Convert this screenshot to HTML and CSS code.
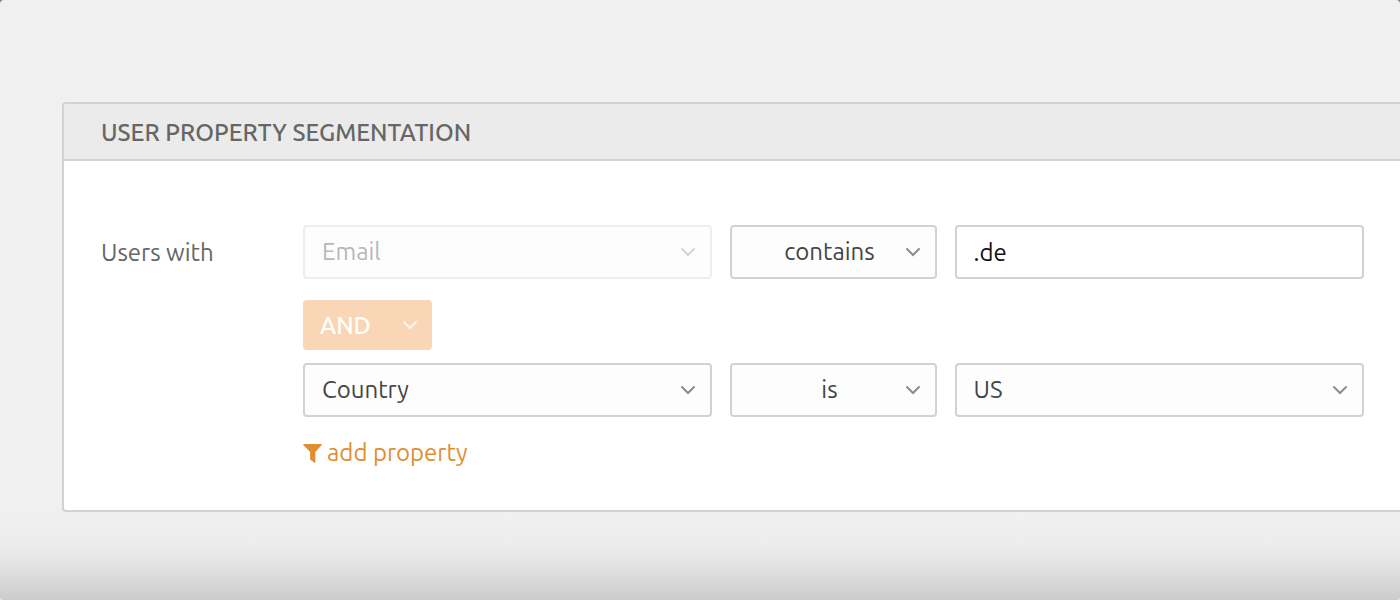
FILE: index.html
```
<!DOCTYPE html>
<html lang="en">
<head>
<meta charset="utf-8">
<title>User property segmentation</title>
<meta name="viewport" content="width=device-width, initial-scale=1">
<link rel="stylesheet" href="styles.css">
</head>
<body>
<svg class="symbols" aria-hidden="true">
  <symbol id="chevron" viewBox="0 0 16 10"><path d="M2 2l6 6 6-6" fill="none" stroke="currentColor" stroke-width="2" stroke-linecap="round"/></symbol>
</svg>
<main class="page">
  <section class="panel">
    <h1 class="panel-title">User property segmentation</h1>
    <form class="panel-body">
      <label class="lead" for="property-1">Users with</label>
      <div class="rules">
        <div class="rule">
          <div class="field field-disabled">
            <select id="property-1" disabled><option>Email</option></select>
            <svg class="chevron"><use href="#chevron"/></svg>
          </div>
          <div class="field field-centered">
            <select aria-label="Email condition"><option>contains</option></select>
            <svg class="chevron"><use href="#chevron"/></svg>
          </div>
          <div class="field"><input type="text" aria-label="Email value" value=".de"></div>
        </div>
        <div class="field joiner">
          <select aria-label="Operator" disabled><option>AND</option></select>
          <svg class="chevron"><use href="#chevron"/></svg>
        </div>
        <div class="rule">
          <div class="field">
            <select aria-label="Property"><option>Country</option></select>
            <svg class="chevron"><use href="#chevron"/></svg>
          </div>
          <div class="field field-centered">
            <select aria-label="Country condition"><option>is</option></select>
            <svg class="chevron"><use href="#chevron"/></svg>
          </div>
          <div class="field">
            <select aria-label="Country value"><option>US</option></select>
            <svg class="chevron"><use href="#chevron"/></svg>
          </div>
        </div>
        <button class="add" type="button">
          <svg class="funnel" viewBox="0 0 20 20"><path d="M1 0h18q1 0 .7 1L13 8.500V19q-.2 1.200-1.200.5L7.500 16.200V8.500L.3 1Q0 0 1 0z" fill="currentColor"/></svg>
          add property
        </button>
      </div>
    </form>
  </section>
</main>
</body>
</html>
```
FILE: styles.css
```
* {
  box-sizing: border-box;
}

html {
  background: linear-gradient(#777, #e4e4e4);
}

body {
  margin: 0;
  color: #666;
  font-family: Ubuntu, "Noto Sans", sans-serif;
  font-size: 24px;
  line-height: 32px;
}

.symbols {
  display: none;
}

.page {
  min-height: 100vh;
  padding: 102px 0 88px 62px;
  border-radius: 4px;
  background: linear-gradient(to top, #cbcbcb 0, #d9d9d9 20px, #e6e6e6 40px, #ededed 60px, #f0f0f0 84px);
}

.panel {
  border: 2px solid #d2d2d2;
  border-right: 0;
  border-radius: 4px 0 0 4px;
  background: #fff;
  overflow: hidden;
}

.panel-title {
  margin: 0;
  padding: 13px 37px 10px;
  border-bottom: 2px solid #d2d2d2;
  background: #ebebeb;
  font-size: 24px;
  font-weight: 500;
  text-transform: uppercase;
}

.panel-body {
  display: grid;
  grid-template-columns: 202px 1fr;
  padding: 64px 36px 41px 37px;
}

.lead {
  padding-top: 12px;
}

.rule {
  display: grid;
  grid-template-columns: 409fr 206fr 409fr;
  gap: 18px;
}

.field {
  position: relative;
  color: #444;
}

.field select,
.field input {
  display: block;
  width: 100%;
  height: 54px;
  margin: 0;
  padding: 0 48px 0 17px;
  border: 2px solid #d2d2d2;
  border-radius: 4px;
  background: #fdfdfd;
  color: inherit;
  font: inherit;
  appearance: none;
  opacity: 1;
}

.field input {
  padding: 0 17px;
  background: #fff;
  color: #111;
}

.field-centered select {
  padding: 0 28px 0 20px;
  text-align-last: center;
}

.field-disabled {
  color: #b8b8b8;
}

.field-disabled select {
  border-color: #eee;
}

.chevron {
  position: absolute;
  top: 50%;
  right: 16px;
  width: 16px;
  height: 10px;
  color: #8c8c8c;
  transform: translateY(-50%);
  pointer-events: none;
}

.field-disabled .chevron {
  color: #d4d4d4;
}

.joiner {
  width: 129px;
  margin: 21px 0 13px;
  color: #fff;
}

.joiner select {
  height: 50px;
  padding-top: 2px;
  border: 0;
  background: #f9d6b5;
  font-weight: 500;
}

.joiner .chevron {
  right: 14px;
  color: #fef4ea;
}

.add {
  display: flex;
  align-items: center;
  gap: 5px;
  margin-top: 20px;
  padding: 0;
  border: 0;
  background: none;
  color: #e08e31;
  font: inherit;
}

.funnel {
  width: 19px;
  height: 19px;
}
```
